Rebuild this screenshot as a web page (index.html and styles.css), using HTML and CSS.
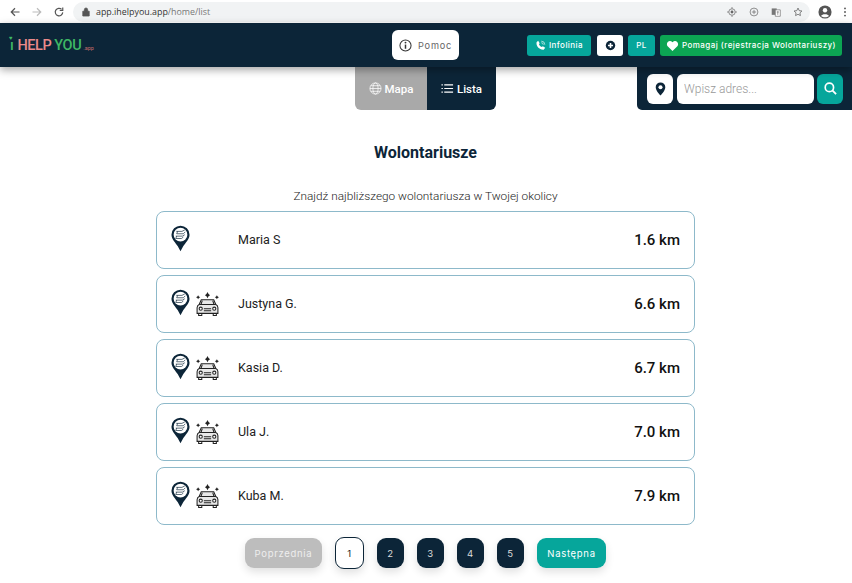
FILE: index.html
```html
<!DOCTYPE html>
<html lang="en">
<head>
    <meta charset="UTF-8">
    <title>I Help You</title>
    <link rel="stylesheet" href="styles.css">
</head>
<body>
    <svg class="defs" width="0" height="0">
        <symbol id="pin" viewBox="0 0 20 28">
            <path d="M10 0.5a9.5 9.5 0 0 1 9.5 9.5c0 5-4.5 8.500-6.500 12l-3 5.500-3-5.500c-2-3.500-6.500-7-6.500-12a9.500 9.500 0 0 1 9.500-9.500z" fill="#0c2538"/>
            <circle cx="10" cy="10" r="7.200" fill="#fff"/>
            <path d="M5.500 6.500h6l3-1.500M7 6.500l-1 2.500h7l2-2M5 11.500h7l2.500-1.500M6 11.500l-1 2.500h6l2-1.500" fill="none" stroke="#0c2538" stroke-width=".7"/>
        </symbol>
        <symbol id="car" viewBox="0 0 24 24">
            <g fill="none" stroke="#222" stroke-width="1">
                <path d="M2 15.500c0-1.500 1-2.500 2-3l2-4.500h12l2 4.500c1 .5 2 1.500 2 3v5.500H2z" fill="#e8e8e8"/>
                <path d="M4 12.500h16M7 8.800l-1.300 3.700M17 8.800l1.300 3.700M8.500 16.500h7M8.500 18.500h7"/>
                <circle cx="5.500" cy="16.500" r="1.500" fill="#fff"/>
                <circle cx="18.500" cy="16.500" r="1.500" fill="#fff"/>
                <path d="M3.500 21v2h3v-2M17.500 21v2h3v-2"/>
            </g>
            <path d="M12 .5l1 2 1.500 1-1.500 1-1 2-1-2-1.500-1 1.500-1zM3 3.500l.7 1.300 1.300.7-1.300.7L3 7.500l-.7-1.300L1 5.500l1.300-.7zM21 3.500l.7 1.300 1.300.7-1.300.7-.7 1.300-.7-1.300-1.300-.7 1.300-.7z" fill="#222"/>
        </symbol>
    </svg>

    <div class="browser-bar">
        <svg class="tool-icon" viewBox="0 0 16 16"><path d="M14 8H3M8 3L3 8l5 5" fill="none" stroke="#555" stroke-width="1.600"/></svg>
        <svg class="tool-icon" viewBox="0 0 16 16"><path d="M2 8h11M8 3l5 5-5 5" fill="none" stroke="#bbb" stroke-width="1.600"/></svg>
        <svg class="tool-icon" viewBox="0 0 16 16"><path d="M13 8.500A5 5 0 1 1 11.500 4.500M13 2v4H9" fill="none" stroke="#555" stroke-width="1.600"/></svg>
        <div class="url-pill">
            <svg class="lock" viewBox="0 0 10 12"><path d="M1 5h8v6H1zM3 5V3a2 2 0 0 1 4 0v2" fill="#555" stroke="#555"/></svg>
            <span class="url">app.ihelpyou.app<span class="url-path">/home/list</span></span>
            <div class="url-tools">
                <svg viewBox="0 0 14 14"><circle cx="7" cy="7" r="4.500" fill="none" stroke="#666"/><circle cx="7" cy="7" r="2" fill="#666"/><path d="M7 0v2.500M7 11.500V14M0 7h2.500M11.500 7H14" stroke="#666"/></svg>
                <svg viewBox="0 0 14 14"><circle cx="7" cy="7" r="5.500" fill="none" stroke="#666"/><path d="M4 7h6M7 4v6" stroke="#666"/></svg>
                <svg viewBox="0 0 14 14"><path d="M1 2h7v9H1z" fill="#777"/><path d="M6 4h7v9H6z" fill="#fff" stroke="#777"/><path d="M8 7h3M9.500 6v5" stroke="#777"/></svg>
                <svg viewBox="0 0 14 14"><path d="M7 1.500l1.700 3.600 3.800.5-2.800 2.600.7 3.800L7 10.200 3.600 12l.7-3.800L1.500 5.600l3.800-.5z" fill="none" stroke="#555"/></svg>
            </div>
        </div>
        <svg class="avatar" viewBox="0 0 16 16"><circle cx="8" cy="8" r="7.500" fill="#555"/><circle cx="8" cy="6" r="2.500" fill="#fff"/><path d="M3.500 12.500c1-2.500 8-2.500 9 0-2 2-7 2-9 0z" fill="#fff"/></svg>
        <svg class="menu-dots" viewBox="0 0 4 14"><circle cx="2" cy="2" r="1.300" fill="#555"/><circle cx="2" cy="7" r="1.300" fill="#555"/><circle cx="2" cy="12" r="1.300" fill="#555"/></svg>
    </div>

    <header class="navbar">
        <div class="logo">
            <span class="logo-i">ı</span><span class="logo-help">HELP</span><span class="logo-you">YOU</span><span class="logo-app">.app</span>
        </div>
        <a class="help-btn">
            <svg viewBox="0 0 14 14"><circle cx="7" cy="7" r="6" fill="none" stroke="#333" stroke-width="1.100"/><path d="M7 6v4.500" stroke="#333" stroke-width="1.600"/><circle cx="7" cy="3.900" r="1" fill="#333"/></svg>
            Pomoc
        </a>
        <div class="nav-actions">
            <a class="nav-btn teal">
                <svg viewBox="0 0 14 14"><path d="M2 3l2-2 2 3-1 1.500c.5 1.500 2 3 3.500 3.500L10 8l3 2-2 2.500C6 13 1 8 2 3z" fill="#fff"/><path d="M8 1.500a4.500 4.500 0 0 1 4.500 4.500M8 3.500A2.500 2.500 0 0 1 10.500 6" fill="none" stroke="#fff" stroke-width=".8"/></svg>
                Infolinia
            </a>
            <a class="nav-btn white-btn">
                <svg viewBox="0 0 14 14"><circle cx="7" cy="7" r="6" fill="#0c2538"/><path d="M3.800 7h6.400M7 3.800v6.400" stroke="#fff" stroke-width="2"/></svg>
            </a>
            <a class="nav-btn teal lang">PL</a>
            <a class="nav-btn green">
                <svg viewBox="0 0 14 14"><path d="M7 13L1.500 7.500C-.5 4.500 3.500 0 7 3.500 10.500 0 14.500 4.500 12.500 7.500z" fill="#fff"/></svg>
                Pomagaj (rejestracja Wolontariuszy)
            </a>
        </div>
    </header>

    <div class="subbar">
        <div class="view-toggle">
            <a class="toggle-btn map-btn">
                <svg viewBox="0 0 14 14"><g fill="none" stroke="#fff" stroke-width=".8"><circle cx="7" cy="7" r="6"/><ellipse cx="7" cy="7" rx="2.800" ry="6"/><path d="M1 7h12M2 4h10M2 10h10"/></g></svg>
                Mapa
            </a>
            <a class="toggle-btn list-btn">
                <svg viewBox="0 0 14 14"><path d="M3.500 3H13M3.500 7H13M3.500 11H13" stroke="#fff" stroke-width="1.300"/><path d="M.5 3h1.500M.5 7h1.500M.5 11h1.500" stroke="#fff" stroke-width="1.300"/></svg>
                Lista
            </a>
        </div>
        <div class="search-panel">
            <a class="pin-btn">
                <svg viewBox="0 0 12 16"><path d="M6 .5a5.500 5.500 0 0 1 5.500 5.500C11.500 10 6 15.500 6 15.500S.5 10 .5 6A5.500 5.500 0 0 1 6 .5z" fill="#0c2538"/><circle cx="6" cy="6" r="2.300" fill="#fff"/></svg>
            </a>
            <input class="address" type="text" placeholder="Wpisz adres...">
            <a class="search-btn">
                <svg viewBox="0 0 14 14"><circle cx="5.800" cy="5.800" r="4.500" fill="none" stroke="#fff" stroke-width="1.800"/><path d="M9 9l4 4" stroke="#fff" stroke-width="2"/></svg>
            </a>
        </div>
    </div>

    <main class="content">
        <h1>Wolontariusze</h1>
        <p class="lead">Znajdź najbliższego wolontariusza w Twojej okolicy</p>

        <div class="volunteers">
            <div class="volunteer">
                <div class="badges"><svg class="pin"><use href="#pin"/></svg></div>
                <span class="name">Maria S</span>
                <span class="distance">1.6 km</span>
            </div>
            <div class="volunteer">
                <div class="badges"><svg class="pin"><use href="#pin"/></svg><svg class="car"><use href="#car"/></svg></div>
                <span class="name">Justyna G.</span>
                <span class="distance">6.6 km</span>
            </div>
            <div class="volunteer">
                <div class="badges"><svg class="pin"><use href="#pin"/></svg><svg class="car"><use href="#car"/></svg></div>
                <span class="name">Kasia D.</span>
                <span class="distance">6.7 km</span>
            </div>
            <div class="volunteer">
                <div class="badges"><svg class="pin"><use href="#pin"/></svg><svg class="car"><use href="#car"/></svg></div>
                <span class="name">Ula J.</span>
                <span class="distance">7.0 km</span>
            </div>
            <div class="volunteer">
                <div class="badges"><svg class="pin"><use href="#pin"/></svg><svg class="car"><use href="#car"/></svg></div>
                <span class="name">Kuba M.</span>
                <span class="distance">7.9 km</span>
            </div>
        </div>

        <nav class="pagination">
            <a class="page-btn wide disabled">Poprzednia</a>
            <a class="page-btn current">1</a>
            <a class="page-btn">2</a>
            <a class="page-btn">3</a>
            <a class="page-btn">4</a>
            <a class="page-btn">5</a>
            <a class="page-btn wide next">Następna</a>
        </nav>
    </main>
</body>
</html>
```

FILE: styles.css
```css
* {
    box-sizing: border-box;
}

html, body {
    height: 100%;
}

body {
    margin: 0;
    overflow: hidden;
    background: #fff;
    color: #222;
    font-family: Roboto, "Liberation Sans", sans-serif;
}

.defs {
    display: block;
    height: 0;
}

/* browser chrome */
.browser-bar {
    display: flex;
    align-items: center;
    height: 23px;
    padding-left: 9px;
    background: #fff;
}

.tool-icon {
    width: 12px;
    height: 12px;
    margin-right: 10px;
}

.url-pill {
    display: flex;
    align-items: center;
    width: 737px;
    height: 20px;
    margin-left: -2px;
    padding: 0 7px 0 9px;
    background: #f1f3f4;
    border-radius: 10px;
}

.lock {
    width: 8px;
    height: 10px;
    margin-right: 6px;
}

.url {
    font-size: 8.900px;
    color: #333;
    font-family: "Open Sans", sans-serif;
}

.url-path {
    color: #777;
}

.url-tools {
    display: flex;
    gap: 12px;
    margin-left: auto;
}

.url-tools svg {
    width: 10px;
    height: 10px;
}

.avatar {
    width: 14px;
    height: 14px;
    margin-left: 8px;
}

.menu-dots {
    width: 4px;
    height: 10px;
    margin-left: 11px;
}

/* navbar */
.navbar {
    position: relative;
    z-index: 2;
    display: flex;
    align-items: center;
    height: 44px;
    padding: 0 10px 0 10px;
    background: #0c2538;
    box-shadow: 0 3px 8px rgba(0, 0, 0, 0.35);
}

.logo {
    width: 382px;
    font-size: 14.500px;
    font-weight: 500;
    letter-spacing: -0.4px;
    white-space: nowrap;
}

.logo-i {
    position: relative;
    margin-right: 4px;
    color: #3fb765;
}

.logo-i::before {
    content: "♥";
    position: absolute;
    top: -3px;
    left: -1px;
    font-size: 6px;
    color: #3fb765;
}

.logo-help {
    color: #ea8a8a;
}

.logo-you {
    margin-left: 3px;
    color: #3fb765;
}

.logo-app {
    margin-left: 2px;
    font-size: 5.500px;
    font-weight: 400;
    letter-spacing: 0;
    color: #c56c6c;
}

.help-btn {
    display: flex;
    align-items: center;
    gap: 6px;
    width: 67px;
    height: 30px;
    padding-left: 7px;
    background: #fff;
    border-radius: 6px;
    font-size: 9.200px;
    letter-spacing: 0.8px;
    color: #666;
    font-family: Inter, sans-serif;
}

.help-btn svg {
    width: 13px;
    height: 13px;
}

.nav-actions {
    display: flex;
    gap: 5px;
    margin-left: auto;
}

.nav-btn {
    display: flex;
    align-items: center;
    justify-content: center;
    gap: 3px;
    height: 21px;
    border-radius: 3px;
    color: #fff;
    font-size: 8px;
    font-weight: 500;
    letter-spacing: 0.45px;
    font-family: Inter, sans-serif;
}

.nav-btn svg {
    width: 11px;
    height: 11px;
}

.teal {
    width: 64px;
    background: #06a69b;
}

.white-btn {
    width: 26px;
    margin-left: 1px;
    background: #fff;
}

.lang {
    width: 27px;
}

.green {
    width: 182px;
    background: #0ca553;
}

.green svg {
    width: 13px;
    height: 13px;
}

/* map / list toggle and search */
.subbar {
    display: flex;
    align-items: flex-start;
    padding-left: 355px;
}

.view-toggle {
    display: flex;
    height: 43px;
    border-radius: 0 0 6px 6px;
    overflow: hidden;
}

.toggle-btn {
    display: flex;
    align-items: center;
    justify-content: center;
    gap: 3px;
    color: #fff;
    font-size: 11.500px;
    font-weight: 500;
}

.toggle-btn svg {
    width: 13px;
    height: 13px;
}

.map-btn {
    width: 72px;
    background: #a9a9a9;
}

.list-btn {
    width: 69px;
    background: #0c2538;
}

.search-panel {
    display: flex;
    align-items: center;
    gap: 3px;
    width: 215px;
    height: 43px;
    margin-left: auto;
    padding-left: 10px;
    background: #0c2538;
    border-radius: 0 0 0 5px;
}

.pin-btn,
.search-btn {
    display: flex;
    align-items: center;
    justify-content: center;
    height: 30px;
    border-radius: 6px;
}

.pin-btn {
    width: 26px;
    margin-right: 1px;
    background: #fff;
}

.pin-btn svg {
    width: 11px;
    height: 14px;
}

.address {
    width: 137px;
    height: 30px;
    padding: 0 7px;
    border: none;
    border-radius: 6px;
    background: #fff;
    font-family: Roboto, sans-serif;
    font-size: 12px;
    font-weight: 300;
}

.address::placeholder {
    color: #999;
}

.search-btn {
    width: 26px;
    background: #06a69b;
}

.search-btn svg {
    width: 13px;
    height: 13px;
}

/* list */
.content {
    display: flex;
    flex-direction: column;
    align-items: center;
    padding-right: 1px;
}

h1 {
    margin: 33px 0 0;
    font-size: 16px;
    line-height: 19px;
    font-weight: 700;
    color: #0c2538;
}

.lead {
    margin: 26px 0 0;
    font-size: 11.800px;
    line-height: 16px;
    font-weight: 300;
    color: #222;
}

.volunteers {
    display: flex;
    flex-direction: column;
    gap: 6px;
    width: 539px;
    margin-top: 7px;
}

.volunteer {
    display: flex;
    align-items: center;
    height: 58px;
    padding: 0 14px;
    border: 1px solid #8db9ca;
    border-radius: 8px;
}

.badges {
    display: flex;
    align-items: center;
    gap: 5px;
    width: 67px;
}

.pin {
    width: 19px;
    height: 27px;
    margin-bottom: 3px;
}

.car {
    width: 25px;
    height: 26px;
}

.name {
    margin-bottom: 2px;
    font-size: 12.500px;
    color: #222;
}

.distance {
    margin-left: auto;
    font-size: 15px;
    font-weight: 500;
    color: #111;
}

/* pagination */
.pagination {
    display: flex;
    align-items: center;
    gap: 13px;
    margin-top: 12px;
}

.page-btn {
    display: flex;
    align-items: center;
    justify-content: center;
    width: 27px;
    height: 30px;
    background: #0c2538;
    border-radius: 9px;
    color: #ddd;
    font-size: 9.500px;
    letter-spacing: 0.7px;
    font-family: Inter, sans-serif;
    box-shadow: 0 4px 8px rgba(0, 0, 0, 0.12);
}

.wide {
    width: 77px;
}

.disabled {
    background: #bdbdbd;
    color: #eee;
}

.current {
    width: 29px;
    height: 32px;
    background: #fff;
    border: 1px solid #0c2538;
    color: #222;
}

.next {
    width: 69px;
    background: #06a69b;
    color: #fff;
}
```
